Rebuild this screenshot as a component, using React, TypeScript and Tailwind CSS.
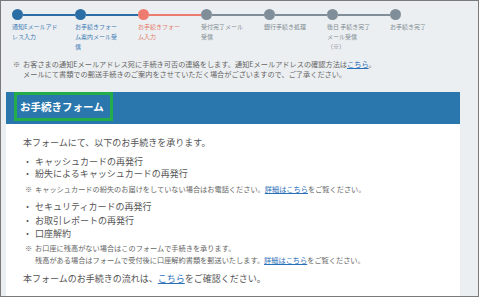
const steps = [
  { lines: ['通知Eメールアド', 'レス入力'], state: 'done' },
  { lines: ['お手続きフォー', 'ム案内メール受', '信'], state: 'done' },
  { lines: ['お手続きフォー', 'ム入力'], state: 'current' },
  { lines: ['受付完了メール', '受信'], state: 'todo' },
  { lines: ['銀行手続き処理'], state: 'todo' },
  { lines: ['後日 手続き完了', 'メール受信', '（※）'], state: 'todo' },
  { lines: ['お手続き完了'], state: 'todo' },
]

const circleCls: Record<string, string> = {
  done: 'bg-[#2b6ea6]',
  current: 'bg-[#ee7b6f]',
  todo: 'bg-[#7f8e98]',
}
const textCls: Record<string, string> = {
  done: 'text-[#3b7ab5]',
  current: 'text-[#e47a6b]',
  todo: 'text-[#7e8b93]',
}

function Link({ children }: { children: React.ReactNode }) {
  return <a href="#" className="text-[#2a70b8] underline">{children}</a>
}

export default function App() {
  return (
    <div className="w-[479px] h-[297px] overflow-hidden border border-[#7a7a7a] bg-[#eceff1] font-['Noto_Sans_CJK_JP','Liberation_Sans',sans-serif] flex flex-col">
      {/* progress steps */}
      <div className="flex pt-[8px] pl-[11px]">
        {steps.map((s, i) => (
          <div key={i} className="w-[63px] flex flex-col">
            <div className="flex items-center h-[11px]">
              <span className={`w-[11px] h-[11px] rounded-full shrink-0 ${circleCls[s.state]}`} />
              {i < steps.length - 1 && <span className={`flex-1 h-[2px] ${circleCls[s.state]}`} />}
            </div>
            <div className={`mt-[2px] text-[6px] leading-[10px] whitespace-nowrap ${textCls[s.state]}`}>
              {s.lines.map((l, j) => (
                <div key={j}>{l}</div>
              ))}
            </div>
          </div>
        ))}
      </div>

      {/* notice */}
      <div className="flex mt-[7px] pl-[12px] text-[7.2px] leading-[10px] text-[#666]">
        <span className="w-[10px] shrink-0">※</span>
        <div>
          <div>
            お客さまの通知Eメールアドレス宛に手続き可否の連絡をします。通知Eメールアドレスの確認方法は<Link>こちら</Link>。
          </div>
          <div>メールにて書類での郵送手続きのご案内をさせていただく場合がございますので、ご了承ください。</div>
        </div>
      </div>

      {/* form panel */}
      <div className="mt-[13px] ml-[5px] w-[454px] flex-1 bg-white">
        <div className="h-[32px] bg-[#2a77ad] pl-[8px]">
          <div className="h-[29px] w-[99px] border-[3px] border-[#22ad4a] flex items-center pl-[3px] pt-[2px]">
            <span className="text-white text-[10.5px] font-bold leading-none">お手続きフォーム</span>
          </div>
        </div>
        <div className="pl-[17px] text-[#555]">
          <p className="mt-[12px] text-[9px] leading-[14px]">本フォームにて、以下のお手続きを承ります。</p>
          <ul className="mt-[6px] text-[9px] leading-[12px]">
            <li className="flex gap-[3px]"><span>・</span>キャッシュカードの再発行</li>
            <li className="flex gap-[3px]"><span>・</span>紛失によるキャッシュカードの再発行</li>
          </ul>
          <div className="mt-[4px] pl-[2px] flex text-[7.2px] leading-[11px] text-[#666]">
            <span className="w-[10px] shrink-0">※</span>
            <span>
              キャッシュカードの紛失のお届けをしていない場合はお電話ください。<Link>詳細はこちら</Link>をご覧ください。
            </span>
          </div>
          <ul className="mt-[5px] text-[9px] leading-[13.5px]">
            <li className="flex gap-[3px]"><span>・</span>セキュリティカードの再発行</li>
            <li className="flex gap-[3px]"><span>・</span>お取引レポートの再発行</li>
            <li className="flex gap-[3px]"><span>・</span>口座解約</li>
          </ul>
          <div className="mt-[1px] pl-[2px] flex text-[7.2px] leading-[12px] text-[#666]">
            <span className="w-[10px] shrink-0">※</span>
            <div>
              <div>お口座に残高がない場合はこのフォームで手続きを承ります。</div>
              <div>
                残高がある場合はフォームで受付後に口座解約書類を郵送いたします。<Link>詳細はこちら</Link>をご覧ください。
              </div>
            </div>
          </div>
          <p className="mt-[6px] text-[9px] leading-[14px]">
            本フォームのお手続きの流れは、<Link>こちら</Link>をご確認ください。
          </p>
        </div>
      </div>
    </div>
  )
}
